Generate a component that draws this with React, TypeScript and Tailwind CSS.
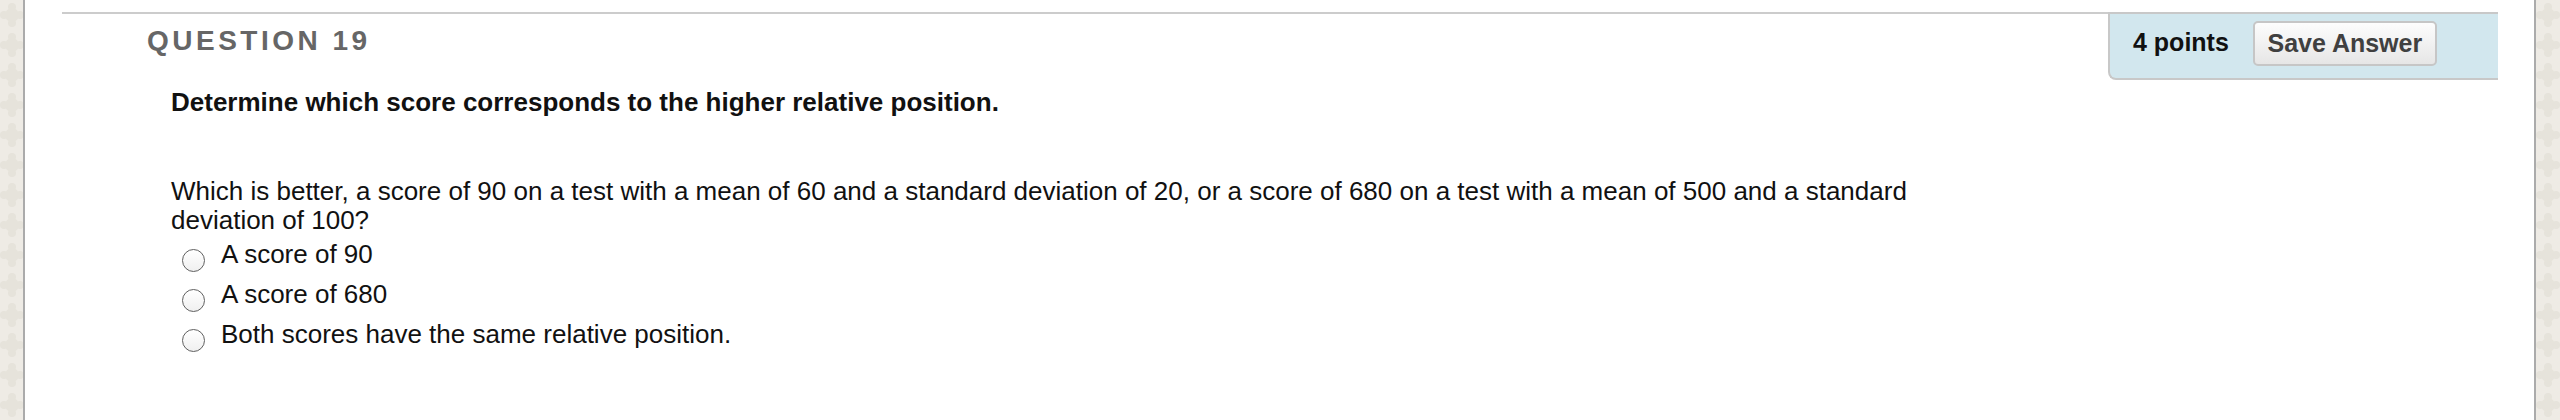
import type { ReactNode } from "react";

const OPTIONS = [
  "A score of 90",
  "A score of 680",
  "Both scores have the same relative position.",
];

function Strip({ side }: { side: "left" | "right" }) {
  return (
    <div
      className={`relative h-full shrink-0 overflow-hidden bg-[#eeebe5] ${
        side === "left" ? "w-[25px] border-r-2 border-[#ababab]" : "w-[26px] border-l-2 border-[#ababab]"
      }`}
    >
      <svg className="absolute inset-0 h-full w-full" aria-hidden>
        <defs>
          <pattern id={`tile-${side}`} width="30" height="30" patternUnits="userSpaceOnUse">
            <circle cx="12" cy="15" r="7" fill="#e6e3db" />
            <circle cx="12" cy="7" r="4" fill="#e6e3db" />
            <circle cx="12" cy="23" r="4" fill="#e6e3db" />
            <circle cx="4" cy="15" r="4" fill="#e6e3db" />
            <circle cx="20" cy="15" r="4" fill="#e6e3db" />
          </pattern>
        </defs>
        <rect width="100%" height="100%" fill={`url(#tile-${side})`} />
      </svg>
    </div>
  );
}

function Radio() {
  return (
    <span className="mt-[8px] block h-[23px] w-[23px] shrink-0 rounded-full border-[1.5px] border-[#5f5f5f] bg-gradient-to-b from-white to-[#f0f0f0]" />
  );
}

function Option({ children }: { children: ReactNode }) {
  return (
    <label className="flex h-[31px] items-start gap-[16px]">
      <Radio />
      <span className="text-[26px] leading-[26px] text-[#111]">{children}</span>
    </label>
  );
}

export default function App() {
  return (
    <div className="flex h-[420px] w-[2560px] overflow-hidden bg-white font-['Liberation_Sans',Arial,Helvetica,sans-serif]">
      <Strip side="left" />

      <main className="min-w-0 flex-1 pl-[37px] pr-[36px] pt-[12px]">
        <div className="flex items-start">
          <div className="flex-1 border-t-2 border-[#cccccc] pl-[85px] pt-[11px]">
            <h2 className="text-[28px] font-bold leading-[32px] tracking-[3.5px] text-[#666]">QUESTION 19</h2>
          </div>
          <div className="flex h-[68px] w-[390px] items-start gap-[24px] rounded-bl-[8px] border-b-2 border-l-2 border-t-2 border-[#c8c8c8] bg-[#d2e7ee] pl-[23px] pt-[7px]">
            <span className="mt-[7px] text-[25px] font-bold leading-[28px] text-[#111]">4 points</span>
            <button className="h-[45px] w-[184px] rounded-[5px] border-2 border-[#c6c6c6] bg-gradient-to-b from-[#fdfdfd] to-[#e6e6e6] text-[25px] font-bold leading-none text-[#404040]">
              Save Answer
            </button>
          </div>
        </div>

        <div className="pl-[109px]">
          <p className="mt-[8px] text-[26px] font-bold leading-[28px] text-[#111]">
            Determine which score corresponds to the higher relative position.
          </p>
          <p className="mt-[61px] w-[1800px] text-[26px] leading-[29px] text-[#111]">
            Which is better, a score of 90 on a test with a mean of 60 and a standard deviation of 20, or a score of 680
            on a test with a mean of 500 and a standard deviation of 100?
          </p>
          <div className="mt-[6px] flex flex-col gap-[9px] pl-[11px]">
            {OPTIONS.map((o) => (
              <Option key={o}>{o}</Option>
            ))}
          </div>
        </div>
      </main>

      <Strip side="right" />
    </div>
  );
}
